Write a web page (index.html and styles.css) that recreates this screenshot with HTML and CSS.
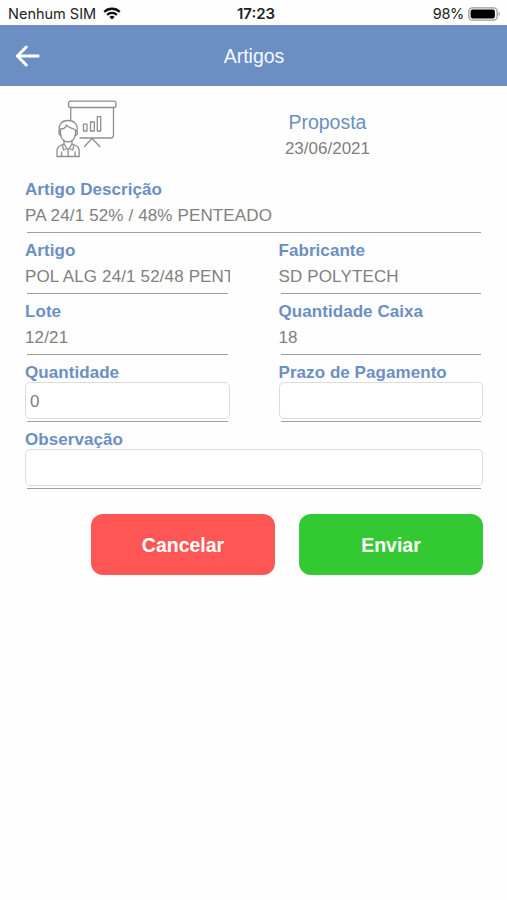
FILE: index.html
```html
<!DOCTYPE html>
<html lang="pt">

<head>
  <meta charset="UTF-8" />
  <title>Artigos</title>
  <link rel="stylesheet" href="styles.css">
</head>

<body>
  <!-- Status bar -->
  <div class="status-bar">
    <div class="carrier">
      <span>Nenhum SIM</span>
      <svg class="wifi" width="18" height="13" viewBox="0 0 18 13" fill="none" stroke="#111" stroke-width="2.3">
        <path d="M1.2 4.9C5.6 0.7 12.4 0.7 16.8 4.9" />
        <path d="M4.1 7.9C6.9 5.3 11.1 5.3 13.9 7.9" />
        <path d="M9 12.6L6.4 9.9C7.9 8.5 10.1 8.5 11.6 9.9Z" fill="#111" stroke="none" />
      </svg>
    </div>
    <div class="clock">17:23</div>
    <div class="battery">
      <span>98%</span>
      <svg width="33" height="14" viewBox="0 0 33 14">
        <rect x="0.8" y="0.8" width="28.4" height="12.4" rx="3.6" fill="#fff" stroke="#999" stroke-width="1.3" />
        <rect x="2.6" y="2.6" width="24.3" height="8.8" rx="1.8" fill="#000" />
        <path d="M30.7 4.8C32.3 5.6 32.3 8.4 30.7 9.2Z" fill="#999" />
      </svg>
    </div>
  </div>

  <header class="header">
    <svg class="back" width="26" height="24" viewBox="0 0 26 24" fill="none" stroke="#fff" stroke-width="3" stroke-linecap="round" stroke-linejoin="round">
      <path d="M11.3 3L2.3 12L11.3 21" />
      <path d="M3 12H24.3" stroke-linecap="butt" />
    </svg>
    <h1>Artigos</h1>
  </header>

  <div class="container">
    <div class="summary">
      <svg class="presenter" width="62" height="60" viewBox="0 0 62 60" fill="none" stroke="#8e8e8e" stroke-width="1.3" stroke-linecap="round" stroke-linejoin="round">
        <!-- Board -->
        <rect x="12.5" y="1.2" width="47.5" height="6.3" rx="2" />
        <path d="M14.7 7.5V20M57.5 7.5V35Q57.5 38 54.5 38H24" />
        <path d="M27.5 24.2H31V31H27.5ZM34.5 22H38.3V31H34.5ZM41.3 16.7H44.7V31H41.3Z" />
        <path d="M28.5 46.5L36 38.5L43.8 46.5" />
        <!-- Person -->
        <path d="M3.3 31.5C2 25 5.7 20.5 12 20.5C18.5 20.5 22.5 25 21 31.5" />
        <path d="M4.5 29C8 29 10 27 10.5 25C12.5 28.5 16 27.5 19.5 30V33.5C19.5 38.5 16 42 12 42C8 42 4.5 38.5 4.5 33.5Z" />
        <path d="M4.5 31C2.4 31 2.4 35.3 5 35.3M19.5 31C22.1 31 22.1 35.3 19 35.3" />
        <path d="M8 41V44L4.5 45.5Q1 47 1 51V56.5H23.2V51Q23.2 47 19.7 45.5L16 44V41" />
        <path d="M8 44L12.2 50L16 44M12.2 50V56.5M6.5 45L7.5 50L10 49M17.7 45L16.8 50L14.2 49M5.5 52V56M19 52V56" />
      </svg>
      <div class="proposal">
        <div class="proposal-title">Proposta</div>
        <div class="proposal-date">23/06/2021</div>
      </div>
    </div>

    <div class="fields">
      <div class="field wide">
        <label>Artigo Descrição</label>
        <div class="value">PA 24/1 52% / 48% PENTEADO</div>
      </div>
      <div class="field">
        <label>Artigo</label>
        <div class="value">POL ALG 24/1 52/48 PENT</div>
      </div>
      <div class="field">
        <label>Fabricante</label>
        <div class="value">SD POLYTECH</div>
      </div>
      <div class="field">
        <label>Lote</label>
        <div class="value">12/21</div>
      </div>
      <div class="field">
        <label>Quantidade Caixa</label>
        <div class="value">18</div>
      </div>
      <div class="field">
        <label for="quantidade">Quantidade</label>
        <input type="text" id="quantidade" value="0" />
      </div>
      <div class="field">
        <label for="prazo">Prazo de Pagamento</label>
        <input type="text" id="prazo" />
      </div>
      <div class="field wide">
        <label for="observacao">Observação</label>
        <input type="text" id="observacao" />
      </div>
    </div>

    <div class="actions">
      <button class="cancel">Cancelar</button>
      <button class="send">Enviar</button>
    </div>
  </div>
</body>

</html>
```
FILE: styles.css
```css
* {
  box-sizing: border-box;
}

body {
  margin: 0;
  background-color: #fefefe;
  color: #808080;
  font-family: "Liberation Sans", Arial, sans-serif;
  font-size: 17px;
}

/* Status bar */
.status-bar {
  display: grid;
  grid-template-columns: 1fr auto 1fr;
  align-items: center;
  height: 25px;
  padding: 2px 6px 0 8px;
  color: #222;
  font-family: Inter, sans-serif;
  font-size: 14.5px;
}

.carrier,
.battery {
  display: flex;
  align-items: center;
}

.carrier {
  gap: 7px;
}

.battery {
  justify-content: flex-end;
  gap: 4px;
}

.battery span {
  letter-spacing: -0.3px;
}

.clock {
  padding-left: 3px;
  font-weight: 600;
  font-size: 15px;
}

/* Header */
.header {
  display: grid;
  grid-template-columns: 1fr auto 1fr;
  align-items: center;
  height: 61px;
  padding: 0 14px 0 15px;
  background-color: #6b8fc3;
}

.header h1 {
  margin: 0;
  padding-top: 2px;
  color: #f4f8fd;
  font-size: 19.5px;
  font-weight: normal;
}

.container {
  padding: 0 24px 0 25px;
}

.summary {
  display: flex;
  justify-content: space-between;
  height: 86px;
  padding: 14px 113px 0 31px;
}

.proposal {
  padding-top: 9px;
  text-align: center;
}

.proposal-title {
  color: #6b8fc3;
  font-size: 19.5px;
  line-height: 26px;
}

.proposal-date {
  line-height: 27px;
}

/* Form fields */
.fields {
  display: grid;
  grid-template-columns: 1fr 1fr;
  column-gap: 49px;
}

.wide {
  grid-column: 1 / -1;
}

.field {
  min-width: 0;
  padding-top: 6px;
}

.field::after {
  content: "";
  display: block;
  height: 1px;
  margin: 0 2px;
  background-color: #a0a0a0;
}

.field label {
  display: block;
  height: 21px;
  color: #6b8fc3;
  font-weight: bold;
  line-height: 23px;
  letter-spacing: 0.06px;
}

.value {
  height: 33px;
  line-height: 34px;
  letter-spacing: 0.14px;
  overflow: hidden;
  white-space: nowrap;
}

.field input {
  display: block;
  width: 100%;
  height: 37px;
  margin: 0 0 2px;
  padding: 2px 4px 0;
  border: 1px solid #dcdcdc;
  border-radius: 5px;
  background-color: #fff;
  color: #808080;
  font-family: inherit;
  font-size: 17px;
}

/* Buttons */
.actions {
  display: flex;
  justify-content: flex-end;
  gap: 24px;
  margin-top: 25px;
}

button {
  width: 184px;
  height: 61px;
  padding: 2px 0 0;
  border: none;
  border-radius: 12px;
  color: #fff;
  font-family: inherit;
  font-size: 19.5px;
  font-weight: bold;
}

.cancel {
  background-color: #ff5555;
}

.send {
  background-color: #33c933;
}
```
